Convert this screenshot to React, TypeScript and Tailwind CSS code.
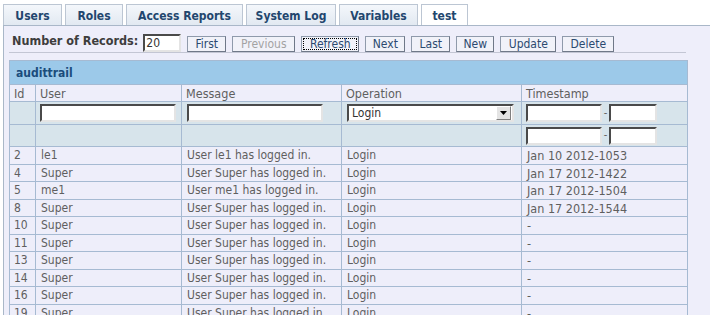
import React from 'react';

const tabs = [
  { label: 'Users', w: 'w-[59px]', active: false },
  { label: 'Roles', w: 'w-[58px]', active: false },
  { label: 'Access Reports', w: 'w-[117px]', active: false },
  { label: 'System Log', w: 'w-[90px]', active: false },
  { label: 'Variables', w: 'w-[79px]', active: false },
  { label: 'test', w: 'w-[47px]', active: true },
];

const buttons = [
  { label: 'First', w: 'w-[39px]' },
  { label: 'Previous', w: 'w-[63px]', disabled: true },
  { label: 'Refresh', w: 'w-[58px]', focused: true },
  { label: 'Next', w: 'w-[40px]' },
  { label: 'Last', w: 'w-[39px]' },
  { label: 'New', w: 'w-[38px]' },
  { label: 'Update', w: 'w-[56px]' },
  { label: 'Delete', w: 'w-[52px]' },
];

const rows = [
  { id: 2, user: 'le1', stamp: 'Jan 10 2012-1053' },
  { id: 4, user: 'Super', stamp: 'Jan 17 2012-1422' },
  { id: 5, user: 'me1', stamp: 'Jan 17 2012-1504' },
  { id: 8, user: 'Super', stamp: 'Jan 17 2012-1544' },
  { id: 10, user: 'Super', stamp: '-' },
  { id: 11, user: 'Super', stamp: '-' },
  { id: 13, user: 'Super', stamp: '-' },
  { id: 14, user: 'Super', stamp: '-' },
  { id: 16, user: 'Super', stamp: '-' },
  { id: 19, user: 'Super', stamp: '-' },
];

const inset =
  'h-[18px] bg-white border-2 border-t-[#4a4a4a] border-l-[#4a4a4a] border-b-[#e4e4e4] border-r-[#e4e4e4]';

function Field({ w }: { w: string }) {
  return <div className={`${inset} ${w}`} />;
}

export default function App() {
  return (
    <div className="w-[710px] h-[315px] overflow-hidden bg-white font-['DejaVu_Sans_Condensed','DejaVu_Sans',sans-serif] text-[11px] text-[#5f5f5f]">
      {/* tabs */}
      <div className="flex items-end gap-[3px] pl-[3px] h-[25px]">
        {tabs.map((t) => (
          <div
            key={t.label}
            className={`${t.w} h-[21px] pt-[2px] flex items-center justify-center border border-[#bcc6d3] border-b-0 text-[12px] font-bold text-[#22466e] ${
              t.active ? 'bg-white' : 'bg-gradient-to-b from-[#f4f7fb] to-[#e2e9f1]'
            }`}
          >
            {t.label}
          </div>
        ))}
      </div>

      {/* panel */}
      <div className="ml-[3px] border-l border-t border-[#a9b7c8] bg-[#eeeefa] h-[300px] pl-[5px]">
        <div className="flex items-end h-[27px] mr-[24px] border-b border-[#c3c6d4] pl-[3px]">
          <span className="text-[12.5px] font-bold text-[#3d3d3d] mr-[5px] mb-[1px]">Number of Records:</span>
          <div className={`${inset} w-[38px] h-[17px] flex items-center pl-[1px] text-[12px] text-[#333]`}>20</div>
          <div className="flex gap-[6px] ml-[6px]">
            {buttons.map((b) => (
              <div
                key={b.label}
                className={`${b.w} h-[16px] flex items-stretch justify-center border border-[#8f9aab] border-b-[#6f7888] border-r-[#6f7888] bg-[#f1f2f9] text-[12px] ${
                  b.disabled ? 'text-[#a3a3a3]' : 'text-[#2c4a70]'
                } ${b.focused ? 'p-[1px]' : ''}`}
              >
                {b.focused ? (
                  <span className="flex-1 flex items-center justify-center border border-dotted border-black leading-[11px]">
                    {b.label}
                  </span>
                ) : (
                  <span className="flex items-center">{b.label}</span>
                )}
              </div>
            ))}
          </div>
        </div>

        <table className="mt-[7px] table-fixed border-collapse w-[678px] border border-[#a6bad2]">
          <colgroup>
            <col className="w-[26px]" />
            <col className="w-[146px]" />
            <col className="w-[160px]" />
            <col className="w-[180px]" />
            <col className="w-[166px]" />
          </colgroup>
          <tbody>
            <tr className="h-[24px] bg-[#9cc9e9]">
              <td colSpan={5} className="px-[6px] text-[12px] font-bold text-[#1b4c7c] border border-[#a6bad2]">
                audittrail
              </td>
            </tr>
            <tr className="h-[17px] bg-[#eeeefa] text-[12.5px]">
              {['Id', 'User', 'Message', 'Operation', 'Timestamp'].map((h) => (
                <td key={h} className="px-[4px] pt-[1px] border border-[#a6bad2] leading-[14px]">
                  {h}
                </td>
              ))}
            </tr>
            <tr className="h-[23px] bg-[#d7e4eb]">
              <td className="border border-[#a6bad2]" />
              <td className="border border-[#a6bad2] px-[4px]">
                <Field w="w-[136px]" />
              </td>
              <td className="border border-[#a6bad2] px-[5px]">
                <Field w="w-[136px]" />
              </td>
              <td className="border border-[#a6bad2] px-[5px]">
                <div className={`${inset} w-[167px] flex items-center justify-between text-[12px] text-[#333]`}>
                  <span className="pl-[3px]">Login</span>
                  <div className="w-[15px] h-[14px] mr-[1px] bg-[#e4e4e4] border border-t-white border-l-white border-b-[#808080] border-r-[#808080] flex items-center justify-center">
                    <svg width="7" height="4" viewBox="0 0 7 4">
                      <path d="M0 0h7L3.5 4z" fill="#000" />
                    </svg>
                  </div>
                </div>
              </td>
              <td className="border border-[#a6bad2] px-[4px]">
                <div className="flex items-center">
                  <Field w="w-[76px]" />
                  <span className="w-[7px] text-center">-</span>
                  <Field w="w-[48px]" />
                </div>
              </td>
            </tr>
            <tr className="h-[22px] bg-[#d7e4eb]">
              <td className="border border-[#a6bad2]" />
              <td className="border border-[#a6bad2]" />
              <td className="border border-[#a6bad2]" />
              <td className="border border-[#a6bad2]" />
              <td className="border border-[#a6bad2] px-[4px]">
                <div className="flex items-center">
                  <Field w="w-[76px]" />
                  <span className="w-[7px] text-center">-</span>
                  <Field w="w-[48px]" />
                </div>
              </td>
            </tr>
            {rows.map((r) => (
              <tr key={r.id} className="h-[17.5px] bg-[#eeeefa] text-[12px]">
                <td className="border border-[#a6bad2] px-[4px] leading-[14px]">{r.id}</td>
                <td className="border border-[#a6bad2] px-[5px] leading-[14px]">{r.user}</td>
                <td className="border border-[#a6bad2] px-[5px] leading-[14px] whitespace-nowrap">
                  User {r.user} has logged in.
                </td>
                <td className="border border-[#a6bad2] px-[5px] leading-[14px]">Login</td>
                <td className="border border-[#a6bad2] px-[5px] pt-[2px] leading-[14px] text-[12.5px]">{r.stamp}</td>
              </tr>
            ))}
          </tbody>
        </table>
      </div>
    </div>
  );
}
